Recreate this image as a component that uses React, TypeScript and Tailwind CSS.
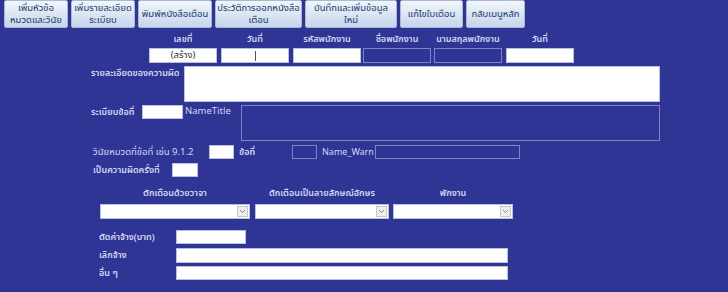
import React from 'react';

const FONT = { fontFamily: '"Tahoma", "Noto Sans Thai", "Loma", "Garuda", "DejaVu Sans", "Liberation Sans", sans-serif' };

const buttons = [
  { text: ['เพิ่มหัวข้อ', 'หมวดและวินัย'], w: 'w-[64px]' },
  { text: ['เพิ่มรายละเอียด', 'ระเบียบ'], w: 'w-[64px]' },
  { text: ['พิมพ์หนังสือเตือน'], w: 'w-[74px]' },
  { text: ['ประวัติการออกหนังสือ', 'เตือน'], w: 'w-[87px]' },
  { text: ['บันทึกและเพิ่มข้อมูล', 'ใหม่'], w: 'w-[92px]' },
  { text: ['แก้ไขใบเตือน'], w: 'w-[63px]' },
  { text: ['กลับเมนูหลัก'], w: 'w-[59px]' },
];

function WhiteBox({ className }: { className: string }) {
  return <div className={`bg-white border border-[#b9bfe0] ${className}`} />;
}

function OutlineBox({ className }: { className: string }) {
  return <div className={`border border-[#7d84c4] ${className}`} />;
}

function Combo({ className }: { className: string }) {
  return (
    <div className={`bg-white border border-[#b9bfe0] h-[15px] flex justify-end items-stretch p-[1px] ${className}`}>
      <div className="w-[11px] bg-[#eeeeee] border border-[#c8c8c8] flex items-center justify-center">
        <svg width="7" height="5" viewBox="0 0 7 5">
          <path d="M1 1 L3.5 3.5 L6 1" stroke="#8a8a8a" strokeWidth="1" fill="none" />
        </svg>
      </div>
    </div>
  );
}

const Label = ({ children, className = '' }: { children: React.ReactNode; className?: string }) => (
  <span className={`text-[9px] leading-[12px] text-[#d3d7f4] font-semibold whitespace-nowrap ${className}`}>{children}</span>
);

const Plain = ({ children, className = '' }: { children: React.ReactNode; className?: string }) => (
  <span className={`text-[9.5px] leading-[12px] text-[#d3d7f4] whitespace-nowrap ${className}`}>{children}</span>
);

export default function App() {
  const header = [
    { label: 'เลขที่', ml: 'ml-[149px]', box: 'white', text: '(สร้าง)' },
    { label: 'วันที่', ml: 'ml-[4px]', box: 'cursor' },
    { label: 'รหัสพนักงาน', ml: 'ml-[4px]', box: 'white' },
    { label: 'ชื่อพนักงาน', ml: 'ml-[2px]', box: 'outline' },
    { label: 'นามสกุลพนักงาน', ml: 'ml-[3px]', box: 'outline' },
    { label: 'วันที่', ml: 'ml-[4px]', box: 'white' },
  ];

  return (
    <div className="w-[728px] h-[292px] bg-[#2f3595] overflow-hidden" style={FONT}>
      {/* Toolbar */}
      <div className="flex gap-[3px] pl-[4px] h-[28px]">
        {buttons.map((b, i) => (
          <button
            key={i}
            className={`${b.w} h-[28px] rounded-[2px] border border-[#a9b9d4] bg-gradient-to-b from-[#f2f6fc] to-[#c6d5ea] text-[#203a6c] text-[9.5px] leading-[12px] flex flex-col items-center justify-center`}
          >
            {b.text.map((t, j) => (
              <span key={j} className="whitespace-nowrap">{t}</span>
            ))}
          </button>
        ))}
      </div>

      {/* Header fields */}
      <div className="flex mt-[5px]">
        {header.map((h, i) => (
          <div key={i} className={`flex flex-col items-center ${h.ml}`}>
            <Label className="h-[12px]">{h.label}</Label>
            <div className="mt-[3px]">
              {h.box === 'outline' ? (
                <OutlineBox className="w-[68px] h-[15px]" />
              ) : (
                <div className="w-[68px] h-[15px] bg-white border border-[#b9bfe0] flex items-center justify-center text-[9.5px] text-[#333] relative">
                  {h.text}
                  {h.box === 'cursor' && <div className="absolute left-[33px] top-[2px] w-[1px] h-[10px] bg-[#555]" />}
                </div>
              )}
            </div>
          </div>
        ))}
      </div>

      {/* Detail */}
      <div className="flex mt-[3px]">
        <Label className="ml-[91px] mt-[1px] w-[93px]">รายละเอียดของความผิด</Label>
        <WhiteBox className="w-[476px] h-[36px]" />
      </div>

      <div className="flex mt-[3px]">
        <Label className="ml-[91px] mt-[1px] w-[51px]">ระเบียบข้อที่</Label>
        <WhiteBox className="w-[41px] h-[14px]" />
        <Plain className="ml-[2px] w-[56px]">NameTitle</Plain>
        <OutlineBox className="w-[419px] h-[36px]" />
      </div>

      <div className="flex mt-[4px] items-start">
        <Plain className="ml-[93px] mt-[1px] w-[116px]">วินัยหมวดที่ข้อที่ เช่น 9.1.2</Plain>
        <WhiteBox className="w-[25px] h-[14px]" />
        <Label className="ml-[5px] mt-[1px] w-[53px]">ข้อที่</Label>
        <OutlineBox className="w-[25px] h-[14px]" />
        <span className="ml-[5px] w-[53px] mt-[1px] text-[9px] leading-[12px] text-[#d3d7f4] whitespace-nowrap">Name_Warn</span>
        <OutlineBox className="w-[145px] h-[14px]" />
      </div>

      <div className="flex mt-[4px]">
        <Label className="ml-[93px] mt-[1px] w-[79px]">เป็นความผิดครั้งที่</Label>
        <WhiteBox className="w-[26px] h-[14px]" />
      </div>

      {/* Warning types */}
      <div className="flex mt-[10px] ml-[100px] gap-[5px]">
        <div className="w-[150px] flex flex-col items-center">
          <Label>ตักเตือนด้วยวาจา</Label>
          <Combo className="w-[150px] mt-[5px]" />
        </div>
        <div className="w-[134px] flex flex-col items-center">
          <Label>ตักเตือนเป็นลายลักษณ์อักษร</Label>
          <Combo className="w-[134px] mt-[5px]" />
        </div>
        <div className="w-[120px] flex flex-col items-center -ml-[1px]">
          <Label>พักงาน</Label>
          <Combo className="w-[120px] mt-[5px]" />
        </div>
      </div>

      {/* Penalties */}
      <div className="flex mt-[11px]">
        <Label className="ml-[99px] mt-[1px] w-[77px]">ตัดค่าจ้าง(บาท)</Label>
        <WhiteBox className="w-[70px] h-[14px]" />
      </div>
      <div className="flex mt-[4px]">
        <Label className="ml-[99px] mt-[1px] w-[77px]">เลิกจ้าง</Label>
        <WhiteBox className="w-[332px] h-[15px]" />
      </div>
      <div className="flex mt-[3px]">
        <Label className="ml-[99px] mt-[1px] w-[77px]">อื่น ๆ</Label>
        <WhiteBox className="w-[332px] h-[14px]" />
      </div>
    </div>
  );
}
